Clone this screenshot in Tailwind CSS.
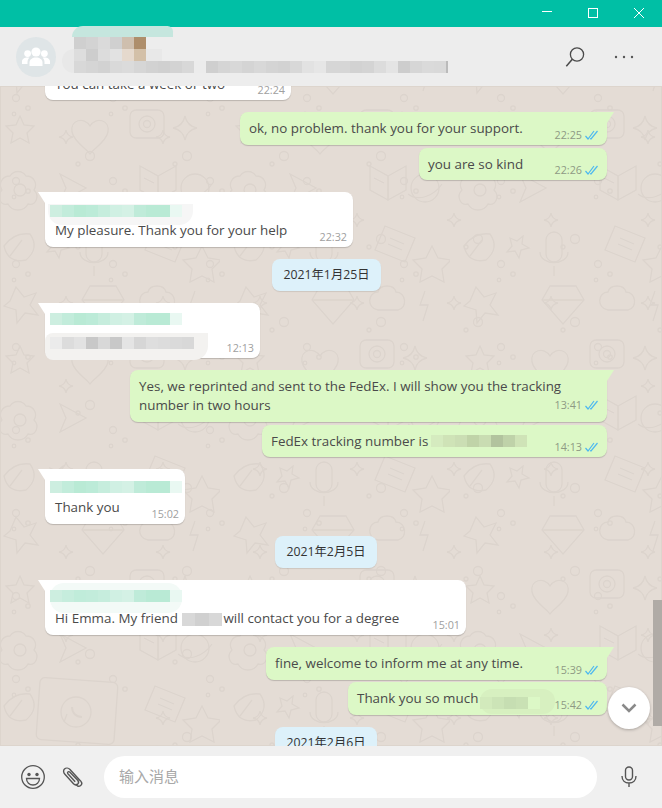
<!doctype html>
<html><head><meta charset="utf-8">
<script src="https://cdn.jsdelivr.net/npm/@tailwindcss/browser@4"></script>
</head>
<body class="m-0">
<div class="w-[662px] h-[808px] flex flex-col overflow-hidden relative bg-[#e4dcd5] font-['Open_Sans','Noto_Sans_CJK_SC',sans-serif] text-[13.4px] text-[#4a4a4a]">
  <!-- title bar -->
  <div class="h-[27px] shrink-0 bg-[#00bfa5] flex justify-end items-center pb-[2px] text-white">
    <div class="w-[46px] flex justify-center"><svg width="12" height="12" viewBox="0 0 12 12"><path d="M1 4.500H11" stroke="#fff" stroke-width="1"/></svg></div>
    <div class="w-[46px] flex justify-center"><svg width="12" height="12" viewBox="0 0 12 12"><rect x="1.500" y="1.500" width="9" height="9" fill="none" stroke="#fff"/></svg></div>
    <div class="w-[46px] flex justify-center"><svg width="12" height="12" viewBox="0 0 12 12"><path d="M1 1L11 11M11 1L1 11" stroke="#fff" stroke-width="1"/></svg></div>
  </div>
  <!-- header -->
  <div class="h-[59px] shrink-0 bg-[#ededed] flex items-center pl-4 pr-[28px] relative z-10">
    <div class="w-10 h-10 rounded-full bg-[#dfe5e7] flex items-center justify-center">
      <svg width="28" height="20" viewBox="0 0 28 20" fill="#fff"><circle cx="14" cy="5" r="4.600"/><circle cx="5.600" cy="6.600" r="3.400"/><circle cx="22.400" cy="6.600" r="3.400"/><path d="M7.500 19v-3.500c0-3 3-5 6.500-5s6.500 2 6.500 5V19z"/><path d="M0 17v-2.500c0-2.500 2.600-4 5.500-4 .7 0 1.200.1 1.800.3C6 12 5.500 13.500 5.500 15.500V17zM28 17v-2.500c0-2.500-2.600-4-5.500-4-.7 0-1.200.1-1.800.3 1.300 1.200 1.800 2.700 1.800 4.700V17z"/></svg>
    </div>
    <div class="flex-1"></div>
    <svg class="mr-[28px]" width="22" height="22" viewBox="0 0 22 22" fill="none" stroke="#4a4a4a" stroke-width="1.300"><circle cx="13" cy="8.500" r="6.600"/><path d="M8.300 13.200L2.300 20.300" stroke-width="1.500"/></svg>
    <svg width="20" height="4" viewBox="0 0 20 4" fill="#555"><circle cx="2" cy="2" r="1.200"/><circle cx="10" cy="2" r="1.200"/><circle cx="18" cy="2" r="1.200"/></svg>
    <!-- censored name and status -->
    <div class="absolute left-[72px] top-[-1px] w-[101px] h-[11px] rounded-tr-[30px] rounded-tl-[60px] bg-[#c5e6de]"></div>
    <div class="absolute left-[62px] top-[22px] w-[100px] h-[24px] rounded-l-full bg-[#e8e8e8]"></div>
    <div class="absolute left-[74px] top-[10px] flex flex-col">
      <div class="flex h-3"><i class="w-3 bg-[#cfcfcf]"></i><i class="w-3 bg-[#d3d3d3]"></i><i class="w-3 bg-[#dadada]"></i><i class="w-3 bg-[#d0d0d0]"></i><i class="w-3 bg-[#cfbfae]"></i><i class="w-3 bg-[#ae8e6b]"></i></div>
      <div class="flex h-3"><i class="w-3 bg-[#dddddd]"></i><i class="w-3 bg-[#cdcdcd]"></i><i class="w-3 bg-[#dcdcdc]"></i><i class="w-3 bg-[#e2e2e2]"></i><i class="w-3 bg-[#e5d9cd]"></i><i class="w-3 bg-[#d3c0a8]"></i><i class="w-3 bg-[#e8e8e8]"></i></div>
      <div class="flex h-3"><i class="w-3 bg-[#d8d8d8]"></i><i class="w-3 bg-[#d5d5d5]"></i><i class="w-3 bg-[#d2d2d2]"></i><i class="w-3 bg-[#d9d9d9]"></i><i class="w-3 bg-[#dbdbdb]"></i><i class="w-3 bg-[#d6d6d6]"></i><i class="w-3 bg-[#d2d2d2]"></i><i class="w-3 bg-[#d0d0d0]"></i><i class="w-3 bg-[#d3d3d3]"></i><i class="w-3 bg-[#d8d8d8]"></i><i class="w-3 bg-[#ececec]"></i>
        <i class="w-3 bg-[#cfcfcf]"></i><i class="w-3 bg-[#d5d5d5]"></i><i class="w-3 bg-[#d8d8d8]"></i><i class="w-3 bg-[#d4d4d4]"></i><i class="w-3 bg-[#d8d8d8]"></i><i class="w-3 bg-[#d4d4d4]"></i><i class="w-3 bg-[#d2d2d2]"></i><i class="w-3 bg-[#d8d8d8]"></i><i class="w-3 bg-[#e2e2e2]"></i><i class="w-3 bg-[#e6e6e6]"></i><i class="w-3 bg-[#d6d6d6]"></i><i class="w-3 bg-[#d6d6d6]"></i><i class="w-3 bg-[#d2d2d2]"></i><i class="w-3 bg-[#d4d4d4]"></i><i class="w-3 bg-[#dcdcdc]"></i><i class="w-3 bg-[#e4e4e4]"></i><i class="w-3 bg-[#cdcdcd]"></i><i class="w-3 bg-[#d6d6d6]"></i><i class="w-3 bg-[#dadada]"></i><i class="w-3 bg-[#d9d9d9]"></i><i class="w-[2px] bg-[#bbbbbb]"></i></div>
    </div>
  </div>

  <!-- chat -->
  <div class="flex-1 relative overflow-hidden">
    <!-- wallpaper doodles -->
    <svg class="absolute inset-0" width="662" height="660" fill="none" stroke="#dcd4cd" stroke-width="1.300">
      <defs>
        <pattern id="doodle" width="230" height="230" patternUnits="userSpaceOnUse" x="-10" y="10">
          <path d="M30 20l4 9 10 1-7 7 2 10-9-5-9 5 2-10-7-7 10-1z"/>
          <path d="M100 30c-6-10-20-6-18 6 2 10 14 16 18 22 4-6 16-12 18-22 2-12-12-16-18-6z"/>
          <rect x="140" y="14" width="34" height="28" rx="6"/><circle cx="157" cy="28" r="8"/><circle cx="157" cy="28" r="3.500"/>
          <path d="M195 20q2 10 12 12q-10 2-12 12q-2-10-12-12q10-2 12-12z"/>
          <path d="M20 80c-8 0-12 8-8 14-6 6-2 16 6 14 4 8 16 8 20 0 8 2 12-8 6-14 4-6 0-14-8-14-4-6-12-6-16 0z"/>
          <circle cx="30" cy="94" r="6"/>
          <path d="M70 78l26 14-26 14 6-14z"/>
          <path d="M150 70l18 10v24l-18-10z"/><path d="M168 80l18-10v24l-18 10z"/><path d="M154 82l10 5"/>
          <circle cx="205" cy="92" r="14"/><path d="M188 98c10 8 26 2 34-10"/>
          <path d="M14 150q10-14 26-12q10 14-4 26q-18 4-22-14z"/><path d="M20 160l12-16"/>
          <path d="M60 142l7 3 6-5-1 8 7 4-8 2-2 8-4-7-8 1 5-6z"/>
          <rect x="96" y="136" width="16" height="30" rx="8"/><path d="M90 156c0 14 28 14 28 0M104 170v10"/>
          <path d="M165 130l30 12-10 24-30-12z"/><path d="M170 142l14 6M168 148l14 6"/>
          <path d="M212 150l6 12 13 2-9 9 2 13-12-6-12 6 2-13-9-9 13-2z"/>
          <path d="M20 205l6-14 8 10 12-4-6 12 8 10-13-2-8 10-1-13-12-4z"/>
          <path d="M100 190h26l8 14-21 24-21-24z"/><path d="M92 204h42"/>
          <path d="M158 196c-10 0-12 16 0 18h20c10-2 8-18-2-18-2-8-16-8-18 0z"/>
          <path d="M205 195l-5 14h8l-5 16"/>
        </pattern>
        <pattern id="dots" width="97" height="83" patternUnits="userSpaceOnUse" x="8" y="4">
          <circle cx="8" cy="8" r="3.500"/><circle cx="20" cy="18" r="2.200"/><circle cx="6" cy="24" r="1.800"/>
          <path d="M58 40q1 6 7 7q-6 1-7 7q-1-6-7-7q6-1 7-7z"/>
          <circle cx="82" cy="66" r="4.500"/><circle cx="70" cy="74" r="2"/>
        </pattern>
      </defs>
      <rect width="662" height="660" fill="url(#dots)"/>
      <rect width="662" height="660" fill="url(#doodle)"/>
      <!-- laptop and whatsapp mark at the bottom left -->
      <g transform="translate(0 -86)">
        <rect x="38" y="680" width="78" height="62" rx="5" fill="#e4dcd5" transform="rotate(4 77 711)"/>
        <circle cx="76" cy="712" r="15" fill="#e4dcd5"/><path d="M64 722l3-8"/>
        <path d="M72 707c0 6 4 10 10 10" stroke-width="2"/>
      </g>
    </svg>

    <div class="relative flex flex-col -mt-[26px]">
      <!-- 1 -->
      <div class="ml-[45px] w-[246px] h-[40px] rounded-lg bg-white shadow-[0_1px_1px_#0000002e] flex justify-between pl-[10px] pr-[6px] pt-[15px]">
        <span class="leading-[18px]">You can take a week or two</span>
        <span class="self-end text-[10.8px] text-[#a0a0a0] leading-[14px] pb-[3px]">22:24</span>
      </div>

      <!-- 2 -->
      <div class="relative mt-[12px] self-end mr-[55px] w-[367px] h-[33px] rounded-lg rounded-tr-none bg-[#dcf8c6] shadow-[0_1px_1px_#0000002e] flex justify-between pl-[9px] pr-[7px]">
        <svg class="absolute -right-[7px] top-0" width="7" height="11" viewBox="0 0 7 11"><path d="M0 0H7L0 11z" fill="#dcf8c6"/></svg>
        <span class="leading-[18px] pt-[7px]">ok, no problem. thank you for your support.</span>
        <span class="self-end flex items-center gap-[3px] text-[10.8px] text-[#8e9a84] leading-[14px] pb-[3px]">22:25<svg width="15" height="10" viewBox="0 0 15 10" fill="none" stroke="#4db8f0" stroke-width="1.200"><path d="M0.500 6l2.500 3L9 1M5 8.500L6 9l6.500-8"/></svg></span>
      </div>
      <!-- 3 -->
      <div class="mt-[3px] self-end mr-[55px] w-[188px] h-[32px] rounded-lg bg-[#dcf8c6] shadow-[0_1px_1px_#0000002e] flex justify-between pl-[9px] pr-[7px]">
        <span class="leading-[18px] pt-[7px]">you are so kind</span>
        <span class="self-end flex items-center gap-[3px] text-[10.8px] text-[#8e9a84] leading-[14px] pb-[3px]">22:26<svg width="15" height="10" viewBox="0 0 15 10" fill="none" stroke="#4db8f0" stroke-width="1.200"><path d="M0.500 6l2.500 3L9 1M5 8.500L6 9l6.500-8"/></svg></span>
      </div>

      <!-- 4 -->
      <div class="relative mt-[12px] ml-[45px] w-[308px] h-[55px] rounded-lg rounded-tl-none bg-white shadow-[0_1px_1px_#0000002e] flex justify-between pl-[10px] pr-[6px]">
        <svg class="absolute -left-[7px] top-0" width="7" height="11" viewBox="0 0 7 11"><path d="M0 0H7V11z" fill="#fff"/></svg>
        <div class="absolute left-[3px] top-[12px] w-[145px] h-[21px] rounded-b-[14px] bg-[#f6f6f6]"></div>
        <div class="absolute left-[5px] top-[13px] flex h-3"><i class="w-3 bg-[#cdeee0]"></i><i class="w-3 bg-[#c2ecdb]"></i><i class="w-3 bg-[#b9ead5]"></i><i class="w-3 bg-[#bcebd8]"></i><i class="w-3 bg-[#c6eddd]"></i><i class="w-3 bg-[#d0f0e3]"></i><i class="w-3 bg-[#d4f1e5]"></i><i class="w-3 bg-[#bfebd9]"></i><i class="w-3 bg-[#b9ead5]"></i><i class="w-3 bg-[#b9ead5]"></i><i class="w-3 bg-[#e9f8f2]"></i></div>
        <span class="relative leading-[18px] pt-[29px]">My pleasure. Thank you for your help</span>
        <span class="self-end text-[10.8px] text-[#a0a0a0] leading-[14px] pb-[3px]">22:32</span>
      </div>

      <!-- date -->
      <div class="mt-[12px] ml-[272px] w-[109px] h-[32px] rounded-lg bg-[#ddf1fa] shadow-[0_1px_1px_#0000001a] flex items-center justify-center text-[12.300px] text-[#333]">2021年1月25日</div>

      <!-- 5 -->
      <div class="relative mt-[12px] ml-[45px] w-[215px] h-[55px] rounded-lg rounded-tl-none bg-white shadow-[0_1px_1px_#0000002e] flex justify-end pr-[6px]">
        <svg class="absolute -left-[7px] top-0" width="7" height="11" viewBox="0 0 7 11"><path d="M0 0H7V11z" fill="#fff"/></svg>
        <div class="absolute left-[5px] top-[10px] flex h-3"><i class="w-3 bg-[#cdeee0]"></i><i class="w-3 bg-[#c2ecdb]"></i><i class="w-3 bg-[#b9ead5]"></i><i class="w-3 bg-[#bcebd8]"></i><i class="w-3 bg-[#c6eddd]"></i><i class="w-3 bg-[#d0f0e3]"></i><i class="w-3 bg-[#d4f1e5]"></i><i class="w-3 bg-[#bfebd9]"></i><i class="w-3 bg-[#b9ead5]"></i><i class="w-3 bg-[#b9ead5]"></i><i class="w-3 bg-[#e9f8f2]"></i></div>
        <div class="absolute left-0 top-[30px] w-[163px] h-[27px] rounded-br-[14px] rounded-l-lg bg-[#f3f2f0]"></div>
        <div class="absolute left-[5px] top-[34px] flex h-3"><i class="w-3 bg-[#ebebeb]"></i><i class="w-3 bg-[#dcdcdc]"></i><i class="w-3 bg-[#e2e2e2]"></i><i class="w-3 bg-[#c8c8c8]"></i><i class="w-3 bg-[#d8d8d8]"></i><i class="w-3 bg-[#c8c8c8]"></i><i class="w-3 bg-[#e4e4e4]"></i><i class="w-3 bg-[#d6d6d6]"></i><i class="w-3 bg-[#dedede]"></i><i class="w-3 bg-[#dcdcdc]"></i><i class="w-3 bg-[#dadada]"></i><i class="w-3 bg-[#d8d8d8]"></i></div>
        <span class="self-end text-[10.8px] text-[#a0a0a0] leading-[14px] pb-[3px]">12:13</span>
      </div>

      <!-- 6 -->
      <div class="relative mt-[12px] self-end mr-[55px] w-[477px] h-[52px] rounded-lg rounded-tr-none bg-[#dcf8c6] shadow-[0_1px_1px_#0000002e] pl-[9px] pr-[7px] pt-[7px] leading-[19px]">
        <svg class="absolute -right-[7px] top-0" width="7" height="11" viewBox="0 0 7 11"><path d="M0 0H7L0 11z" fill="#dcf8c6"/></svg>
        <div class="whitespace-nowrap w-fit">Yes, we reprinted and sent to the FedEx. I will show you the tracking</div>
        <div class="flex justify-between items-start">
          <span>number in two hours</span>
          <span class="flex items-center gap-[3px] text-[10.8px] text-[#8e9a84] leading-[14px] pt-[2px]">13:41<svg width="15" height="10" viewBox="0 0 15 10" fill="none" stroke="#4db8f0" stroke-width="1.200"><path d="M0.500 6l2.500 3L9 1M5 8.500L6 9l6.500-8"/></svg></span>
        </div>
      </div>
      <!-- 7 -->
      <div class="mt-[3px] self-end mr-[55px] w-[345px] h-[32px] rounded-lg bg-[#dcf8c6] shadow-[0_1px_1px_#0000002e] flex justify-between pl-[9px] pr-[7px]">
        <div class="flex items-start pt-[7px]">
          <span class="leading-[18px]">FedEx tracking number is</span>
          <div class="flex h-3 mt-[3px] ml-[3px]"><i class="w-3 bg-[#d5ebbf]"></i><i class="w-3 bg-[#cfe3b7]"></i><i class="w-3 bg-[#cbdeb4]"></i><i class="w-3 bg-[#c0d3a8]"></i><i class="w-3 bg-[#c9dcb2]"></i><i class="w-3 bg-[#b2c39e]"></i><i class="w-3 bg-[#bfd2a9]"></i><i class="w-3 bg-[#cfe3b7]"></i></div>
        </div>
        <span class="self-end flex items-center gap-[3px] text-[10.8px] text-[#8e9a84] leading-[14px] pb-[3px]">14:13<svg width="15" height="10" viewBox="0 0 15 10" fill="none" stroke="#4db8f0" stroke-width="1.200"><path d="M0.500 6l2.500 3L9 1M5 8.500L6 9l6.500-8"/></svg></span>
      </div>

      <!-- 8 -->
      <div class="relative mt-[12px] ml-[45px] w-[140px] h-[55px] rounded-lg rounded-tl-none bg-white shadow-[0_1px_1px_#0000002e] flex justify-between pl-[10px] pr-[6px]">
        <svg class="absolute -left-[7px] top-0" width="7" height="11" viewBox="0 0 7 11"><path d="M0 0H7V11z" fill="#fff"/></svg>
        <div class="absolute left-[5px] top-[12px] flex h-3"><i class="w-3 bg-[#cdeee0]"></i><i class="w-3 bg-[#c2ecdb]"></i><i class="w-3 bg-[#b9ead5]"></i><i class="w-3 bg-[#bcebd8]"></i><i class="w-3 bg-[#c6eddd]"></i><i class="w-3 bg-[#d0f0e3]"></i><i class="w-3 bg-[#d4f1e5]"></i><i class="w-3 bg-[#bfebd9]"></i><i class="w-3 bg-[#b9ead5]"></i><i class="w-3 bg-[#b9ead5]"></i><i class="w-3 bg-[#e9f8f2]"></i></div>
        <span class="leading-[18px] pt-[29px]">Thank you</span>
        <span class="self-end text-[10.8px] text-[#a0a0a0] leading-[14px] pb-[3px]">15:02</span>
      </div>

      <!-- date -->
      <div class="mt-[12px] ml-[275px] w-[102px] h-[32px] rounded-lg bg-[#ddf1fa] shadow-[0_1px_1px_#0000001a] flex items-center justify-center text-[12.300px] text-[#333]">2021年2月5日</div>

      <!-- 9 -->
      <div class="relative mt-[12px] ml-[45px] w-[421px] h-[55px] rounded-lg rounded-tl-none bg-white shadow-[0_1px_1px_#0000002e] flex justify-between pl-[10px] pr-[6px]">
        <svg class="absolute -left-[7px] top-0" width="7" height="11" viewBox="0 0 7 11"><path d="M0 0H7V11z" fill="#fff"/></svg>
        <div class="absolute left-[5px] top-[3px] w-[132px] h-[30px] rounded-[14px] bg-[#f3faf7]"></div>
        <div class="absolute left-[5px] top-[10px] flex h-3"><i class="w-3 bg-[#cdeee0]"></i><i class="w-3 bg-[#c6eddd]"></i><i class="w-3 bg-[#c0ecda]"></i><i class="w-3 bg-[#c2ecdb]"></i><i class="w-3 bg-[#c6eddd]"></i><i class="w-3 bg-[#d0f0e3]"></i><i class="w-3 bg-[#d4f1e5]"></i><i class="w-3 bg-[#bfebd9]"></i><i class="w-3 bg-[#b9ead5]"></i><i class="w-3 bg-[#b9ead5]"></i><i class="w-3 bg-[#e9f8f2]"></i></div>
        <div class="flex items-start pt-[29px] relative">
          <span class="leading-[18px]">Hi Emma. My friend</span>
          <div class="flex h-[13px] mt-[4px] ml-[4px] mr-[1px] rounded-b-sm"><i class="w-[13.500px] bg-[#d8d8d8]"></i><i class="w-[13.500px] bg-[#d0d0d0]"></i><i class="w-[13.500px] bg-[#d8d8d8]"></i></div>
          <span class="leading-[18px]">will contact you for a degree</span>
        </div>
        <span class="self-end text-[10.8px] text-[#a0a0a0] leading-[14px] pb-[3px]">15:01</span>
      </div>

      <!-- 10 -->
      <div class="relative mt-[12px] self-end mr-[55px] w-[341px] h-[33px] rounded-lg rounded-tr-none bg-[#dcf8c6] shadow-[0_1px_1px_#0000002e] flex justify-between pl-[9px] pr-[7px]">
        <svg class="absolute -right-[7px] top-0" width="7" height="11" viewBox="0 0 7 11"><path d="M0 0H7L0 11z" fill="#dcf8c6"/></svg>
        <span class="leading-[18px] pt-[7px]">fine, welcome to inform me at any time.</span>
        <span class="self-end flex items-center gap-[3px] text-[10.8px] text-[#8e9a84] leading-[14px] pb-[3px]">15:39<svg width="15" height="10" viewBox="0 0 15 10" fill="none" stroke="#4db8f0" stroke-width="1.200"><path d="M0.500 6l2.500 3L9 1M5 8.500L6 9l6.500-8"/></svg></span>
      </div>
      <!-- 11 -->
      <div class="relative mt-[2px] self-end mr-[55px] w-[259px] h-[33px] rounded-lg bg-[#dcf8c6] shadow-[0_1px_1px_#0000002e] flex justify-between pl-[9px] pr-[7px]">
        <span class="leading-[18px] pt-[7px]">Thank you so much</span>
        <div class="absolute left-[132px] top-[7px] w-[75px] h-[25px] rounded-[12px] bg-[#d7f0c0]"></div>
        <div class="absolute left-[132px] top-[15px] flex h-3"><i class="w-3 bg-[#d2eabc]"></i><i class="w-3 bg-[#cce4b7]"></i><i class="w-3 bg-[#c6deb2]"></i><i class="w-3 bg-[#c9e1b4]"></i><i class="w-3 bg-[#dcf8c6]"></i></div>
        <span class="relative self-end flex items-center gap-[3px] text-[10.8px] text-[#8e9a84] leading-[14px] pb-[3px]">15:42<svg width="15" height="10" viewBox="0 0 15 10" fill="none" stroke="#4db8f0" stroke-width="1.200"><path d="M0.500 6l2.500 3L9 1M5 8.500L6 9l6.500-8"/></svg></span>
      </div>

      <!-- date -->
      <div class="mt-[12px] ml-[275px] w-[102px] h-[32px] rounded-lg bg-[#ddf1fa] shadow-[0_1px_1px_#0000001a] flex items-center justify-center text-[12.300px] text-[#333]">2021年2月6日</div>
    </div>

    <!-- scrollbar thumb and jump button -->
    <div class="absolute right-0 top-[514px] w-[9px] h-[126px] bg-[#b0aba6]"></div>
    <div class="absolute left-[608px] top-[601px] w-[42px] h-[42px] rounded-full bg-white shadow-[0_1px_3px_#00000040] flex items-center justify-center">
      <svg width="16" height="10" viewBox="0 0 16 10" fill="none" stroke="#8a8a8a" stroke-width="2.500"><path d="M1.500 1.500L8 8l6.500-6.500"/></svg>
    </div>
  </div>

  <!-- footer -->
  <div class="h-[62px] shrink-0 bg-[#f0f0f0] flex items-center relative z-10 pl-[21px] pr-[25px]">
    <svg width="24" height="24" viewBox="0 0 24 24" fill="none" stroke="#555" stroke-width="1.300"><circle cx="12" cy="12" r="11.300"/><circle cx="8" cy="9.500" r="1.700" fill="#555" stroke="none"/><circle cx="16" cy="9.500" r="1.700" fill="#555" stroke="none"/><path d="M5.500 13.500h13c0 4-3 6.500-6.500 6.500s-6.500-2.500-6.500-6.500z"/></svg>
    <svg class="ml-[17px]" width="22" height="22" viewBox="0 0 22 22" fill="none" stroke="#555" stroke-width="1.400"><path d="M19 15.500L8 3.500C6.300 1.700 3.800 1.800 2.500 3s-1.200 3.600.4 5.300l8.600 9.400c1.100 1.200 2.900 1.500 4.200.4 1.100-1 1-2.600 0-3.800L7.700 6.100c-.5-.6-1.300-.7-1.800-.2s-.5 1.200 0 1.800l7.300 8"/><path d="M19 15.500c1 1.300.9 3-.3 4s-3 .9-4.100-.4l-1-1.100"/></svg>
    <div class="ml-[20px] w-[493px] h-[42px] rounded-full bg-white flex items-center pl-[15px] pb-[2px] text-[15px] text-[#a8a8a8]">输入消息</div>
    <div class="flex-1"></div>
    <svg width="16" height="22" viewBox="0 0 16 22" fill="none" stroke="#555" stroke-width="1.400"><rect x="4.500" y="1" width="7" height="13" rx="3.500"/><path d="M1 10c0 4.500 3 7 7 7s7-2.500 7-7M8 17v4"/></svg>
  </div>
</div>
</body></html>
